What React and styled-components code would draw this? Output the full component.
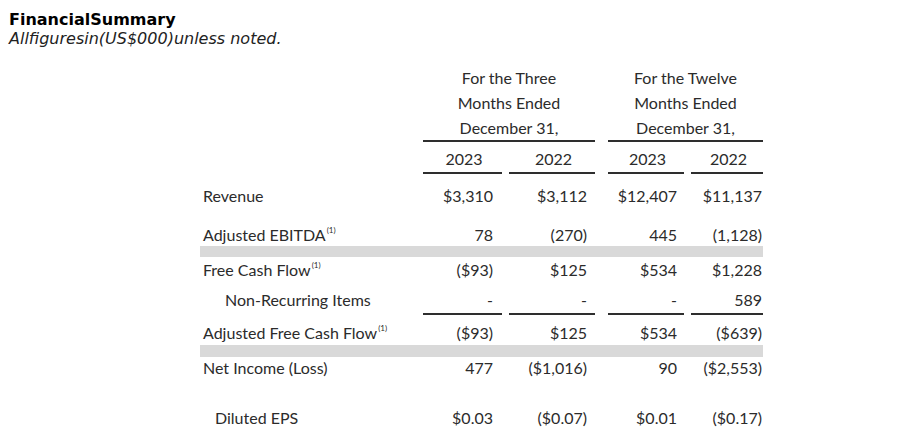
import React from 'react';
import styled, { createGlobalStyle } from 'styled-components';

const GlobalStyle = createGlobalStyle`
  body {
    margin: 0;
    padding: 8px;
    background: #ffffff;
  }
`;

const Page = styled.div`
  width: 881px;
`;

const Title = styled.div`
  font-family: "DejaVu Sans", Verdana, sans-serif;
  font-weight: bold;
  font-size: 16px;
  line-height: 19px;
  color: #000;
  margin-top: 2px;
  margin-left: 1px;
`;

const Subtitle = styled.div`
  font-family: "DejaVu Sans", Verdana, sans-serif;
  font-style: italic;
  font-size: 16px;
  line-height: 19px;
  color: #222;
  margin-left: 1px;
`;

const Table = styled.div`
  margin-left: 192px;
  margin-top: 17px;
  width: 563px;
  font-family: Lato, "Liberation Sans", sans-serif;
  font-size: 16px;
  color: #2b2b2b;
`;

const Row = styled.div`
  display: grid;
  grid-template-columns: 223px 79px 93px 89px 79px;
  height: ${p => p.$h}px;
  padding-top: ${p => p.$pt || 0}px;
  box-sizing: border-box;
  line-height: 22px;
`;

const gaps = [0, 0, 7, 13, 7];
const pads = [0, 9, 8, 7, 1];

const Cell = styled.div`
  margin-left: ${p => gaps[p.$col]}px;
  padding-right: ${p => (p.$center ? 0 : pads[p.$col])}px;
  padding-left: ${p => p.$indent || 3}px;
  text-align: ${p => (p.$col === 0 ? 'left' : p.$center ? 'center' : 'right')};
  border-bottom: ${p => (p.$rule ? '2px solid #2e2e2e' : 'none')};
  white-space: nowrap;
`;

const GroupHead = styled.div`
  grid-column: ${p => p.$span};
  margin-left: ${p => p.$gap}px;
  text-align: center;
  line-height: 25px;
  border-bottom: 2px solid #2e2e2e;
  height: 77px;
  box-sizing: border-box;
`;

const Band = styled.div`
  height: ${p => p.$h}px;
  background: #d9d9d9;
`;

const Sup = styled.sup`
  font-size: 8px;
  vertical-align: 8px;
  margin-left: 1px;
  line-height: 0;
`;

const rows = [
  { label: 'Revenue', vals: ['$3,310', '$3,112', '$12,407', '$11,137'], h: 44, pt: 11 },
  { label: 'Adjusted EBITDA', note: true, vals: ['78', '(270)', '445', '(1,128)'], h: 28, pt: 6 },
  { band: 11 },
  { label: 'Free Cash Flow', note: true, vals: ['($93)', '$125', '$534', '$1,228'], h: 26, pt: 2 },
  { label: 'Non-Recurring Items', indent: 25, vals: ['-', '-', '-', '589'], h: 32, pt: 6, rule: true },
  { label: 'Adjusted Free Cash Flow', note: true, vals: ['($93)', '$125', '$534', '($639)'], h: 30, pt: 7 },
  { band: 12 },
  { label: 'Net Income (Loss)', vals: ['477', '($1,016)', '90', '($2,553)'], h: 23, pt: 0 },
  { label: 'Diluted EPS', indent: 15, vals: ['$0.03', '($0.07)', '$0.01', '($0.17)'], h: 60, pt: 27 },
];

export default function App() {
  return (
    <Page>
      <GlobalStyle />
      <Title>FinancialSummary</Title>
      <Subtitle>Allfiguresin(US$000)unless noted.</Subtitle>
      <Table>
        <Row $h={77}>
          <div />
          <GroupHead $span="2 / 4" $gap={0}>
            For the Three<br />Months Ended<br />December 31,
          </GroupHead>
          <GroupHead $span="4 / 6" $gap={13}>
            For the Twelve<br />Months Ended<br />December 31,
          </GroupHead>
        </Row>
        <Row $h={32} $pt={6}>
          <div />
          {['2023', '2022', '2023', '2022'].map((y, i) => (
            <Cell key={i} $col={i + 1} $center $indent={0} $rule>{y}</Cell>
          ))}
        </Row>
        {rows.map((r, i) =>
          r.band ? (
            <Band key={i} $h={r.band} />
          ) : (
            <Row key={i} $h={r.h} $pt={r.pt}>
              <Cell $col={0} $indent={r.indent}>
                {r.label}
                {r.note && <Sup>(1)</Sup>}
              </Cell>
              {r.vals.map((v, j) => (
                <Cell key={j} $col={j + 1} $indent={0} $rule={r.rule}>{v}</Cell>
              ))}
            </Row>
          )
        )}
      </Table>
    </Page>
  );
}
